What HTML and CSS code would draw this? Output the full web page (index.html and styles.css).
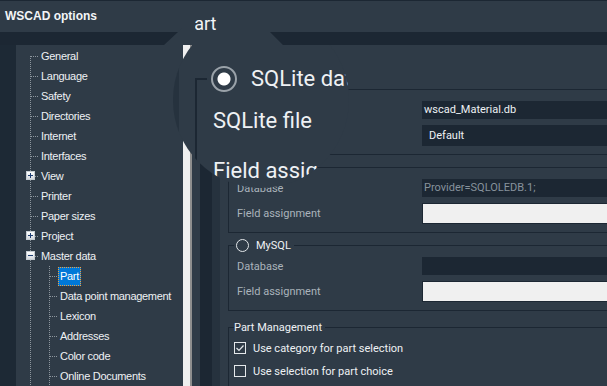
FILE: index.html
```html
<!DOCTYPE html>
<html>
<head>
    <meta charset="utf-8">
    <title>WSCAD options</title>
    <link rel="stylesheet" href="styles.css">
</head>
<body>
    <div class="titlebar">
        <div class="app-title">WSCAD options</div>
        <h1 class="page-title">Part</h1>
    </div>
    <div class="band"></div>
    <div class="main">
        <div class="gutter"></div>
        <div class="tree">
            <ul class="tree-root">
                <li><div class="node"><span class="lbl">General</span></div></li>
                <li><div class="node"><span class="lbl">Language</span></div></li>
                <li><div class="node"><span class="lbl">Safety</span></div></li>
                <li><div class="node"><span class="lbl">Directories</span></div></li>
                <li><div class="node"><span class="lbl">Internet</span></div></li>
                <li><div class="node"><span class="lbl">Interfaces</span></div></li>
                <li><div class="node"><span class="box plus"></span><span class="lbl">View</span></div></li>
                <li><div class="node"><span class="lbl">Printer</span></div></li>
                <li><div class="node"><span class="lbl">Paper sizes</span></div></li>
                <li><div class="node"><span class="box plus"></span><span class="lbl">Project</span></div></li>
                <li><div class="node"><span class="box"></span><span class="lbl">Master data</span></div>
                    <ul class="tree-sub">
                        <li><div class="node"><span class="lbl sel">Part</span></div></li>
                        <li><div class="node"><span class="lbl">Data point management</span></div></li>
                        <li><div class="node"><span class="lbl">Lexicon</span></div></li>
                        <li><div class="node"><span class="lbl">Addresses</span></div></li>
                        <li><div class="node"><span class="lbl">Color code</span></div></li>
                        <li><div class="node"><span class="lbl">Online Documents</span></div></li>
                    </ul>
                </li>
            </ul>
        </div>
        <div class="scroll"></div>
        <div class="col-slate"></div>
        <div class="col-dark"></div>
        <div class="col-mid"></div>
        <div class="panel">
            <div class="group">
                <div class="legend"><span class="radio on"></span>SQLite database</div>
                <div class="rows">
                    <div class="row"><span class="row-label active">SQLite file</span><span class="field">wscad_Material.db</span></div>
                    <div class="row"><span class="row-label active">Field assignment</span><span class="field select">Default</span></div>
                </div>
            </div>
            <div class="group">
                <div class="legend"><span class="radio"></span>SQL Server</div>
                <div class="rows">
                    <div class="row"><span class="row-label">Database</span><span class="field muted">Provider=SQLOLEDB.1;</span></div>
                    <div class="row"><span class="row-label">Field assignment</span><span class="field light"></span></div>
                </div>
            </div>
            <div class="group">
                <div class="legend"><span class="radio"></span>MySQL</div>
                <div class="rows">
                    <div class="row"><span class="row-label">Database</span><span class="field"></span></div>
                    <div class="row"><span class="row-label">Field assignment</span><span class="field light"></span></div>
                </div>
            </div>
            <div class="group last">
                <div class="legend plain">Part Management</div>
                <div class="checks">
                    <div class="check">
                        <svg width="12" height="12" viewBox="0 0 12 12"><rect x="0.5" y="0.5" width="11" height="11" fill="none" stroke="#e4e8eb"/><path d="M2.5 6l2.5 2.5 4.5-5" fill="none" stroke="#e4e8eb" stroke-width="1.2"/></svg>
                        Use category for part selection
                    </div>
                    <div class="check">
                        <svg width="12" height="12" viewBox="0 0 12 12"><rect x="0.5" y="0.5" width="11" height="11" fill="none" stroke="#e4e8eb"/></svg>
                        Use selection for part choice
                    </div>
                </div>
            </div>
        </div>
    </div>

    <!-- magnifier: same panel, drawn at 2x around (261,100) -->
    <div class="lens">
        <div class="lens-view">
            <div class="lens-src">
                <div class="col-dark"></div>
                <div class="col-mid"></div>
                <div class="panel">
                    <div class="group">
                        <div class="legend"><span class="radio on"></span>SQLite database</div>
                        <div class="rows">
                            <div class="row"><span class="row-label active">SQLite file</span><span class="field"></span></div>
                            <div class="row"><span class="row-label active">Field assignment</span><span class="field select"></span></div>
                        </div>
                    </div>
                </div>
            </div>
        </div>
    </div>
    <div class="glare"></div>
</body>
</html>
```

FILE: styles.css
```css
*{box-sizing: border-box;}
body{margin: 0;width: 607px;height: 386px;overflow: hidden;position: relative;background: #2f3b47;font-family: Roboto, "Liberation Sans", sans-serif;font-size: 11px;}

.titlebar{position: relative;z-index: 2;display: flex;height: 32px;border-top: 1px solid #1c2733;background: #2f3b47;}
.app-title{width: 183px;padding: 8px 0 0 5px;font: bold 12px/14px "Liberation Sans", sans-serif;color: #f3f5f7;}
.page-title{margin: 0;padding-top: 13px;font: 400 18px/20px Roboto, sans-serif;color: #f3f5f7;}
.band{position: relative;z-index: 2;height: 13px;background: #1c2733;}

.main{display: flex;height: 341px;}
.gutter{width: 16px;background: #1d2935;}
.tree{width: 167px;padding-top: 1px;overflow: hidden;}
.tree ul{list-style: none;margin: 0;padding: 0;position: relative;}
.tree ul:before{content: "";position: absolute;left: 0;top: 10px;bottom: 0;width: 1px;background: linear-gradient(#8d969e 1px, transparent 1px) 0 0/1px 2px repeat-y;}
.tree .tree-root{margin-left: 14px;}
.tree .tree-sub{margin-left: 19px;}
.tree .tree-sub:before{top: 0;}
.node{position: relative;height: 20px;display: flex;align-items: center;padding-left: 9px;}
.node:before{content: "";position: absolute;left: 1px;top: 10px;width: 8px;height: 1px;background: linear-gradient(to right, #8d969e 1px, transparent 1px) 0 0/2px 1px repeat-x;}
.lbl{padding: 0 2px;font: 11px/15px "Liberation Sans", sans-serif;letter-spacing: -0.3px;color: #eef1f4;white-space: nowrap;}
.lbl.sel{line-height: 19px;background: #0078d7;outline: 1px dotted #f0a040;outline-offset: -1px;color: #fff;}
.box{position: absolute;z-index: 1;left: -4px;top: 5px;width: 9px;height: 9px;border: 1px solid #c5ccd3;background: linear-gradient(#ffffff, #d3d8dd);}
.box:before{content: "";position: absolute;left: 1px;top: 3px;width: 5px;height: 1px;background: #1e3f74;}
.box.plus:after{content: "";position: absolute;left: 3px;top: 1px;width: 1px;height: 5px;background: #1e3f74;}

.scroll{width: 9px;background: #efefef;border-right: 2px solid #8e8e8e;}
.col-slate{width: 8px;}
.col-dark{width: 12px;flex: none;background: #1c2733;}
.col-mid{width: 8px;flex: none;background: #26323e;}

.panel{flex: 1;padding-top: 44px;overflow: hidden;}
.group{margin: 12px 0 0 8px;padding: 0 0 8px 8px;border: 1px solid #1c2733;border-right: 0;}
.group:first-child{margin-top: 0;}
.group.last{margin-top: 16px;}
.legend{display: flex;align-items: center;gap: 7px;width: max-content;height: 14px;margin: -8px 0 0 -3px;padding: 0 3px 0 2px;background: #2f3b47;color: #eef1f4;}
.legend.plain{padding-left: 0;}
.radio{width: 13px;height: 13px;border-radius: 50%;border: 1px solid #e3e7ea;}
.radio.on{border-color: #9aa2a9;background: radial-gradient(circle, #fff 0 3px, transparent 3.5px);}

.rows{display: flex;flex-direction: column;gap: 6px;padding-top: 5px;}
.row{display: flex;align-items: center;}
.row-label{width: 185px;flex: none;color: #aab3bb;white-space: nowrap;}
.row-label.active{color: #eef1f4;}
.field{width: 200px;flex: none;height: 18px;padding-left: 2px;line-height: 18px;background: #1c2733;color: #eef1f4;white-space: nowrap;}
.field.select{height: 21px;line-height: 21px;padding-left: 7px;}
.field.muted{color: #87929c;}
.field.light{height: 21px;background: #f0f0f0;border: 1px solid #1c2733;}

.checks{display: flex;flex-direction: column;gap: 7px;padding-top: 6px;}
.check{display: flex;align-items: center;gap: 7px;height: 16px;margin-left: -3px;color: #eef1f4;}

.lens{position: absolute;z-index: 1;left: 173px;top: 12px;width: 176px;height: 176px;border-radius: 50%;overflow: hidden;background: #2f3b47;}
.lens-view{position: absolute;left: 0;top: 0;width: 300px;transform: scale(2);transform-origin: 0 0;}
.lens-src{display: flex;height: 200px;margin: -11px 0 0 -17px;}
.glare{position: absolute;z-index: 3;left: 0;top: 0;width: 300px;height: 45px;background: #2f3b47;clip-path: polygon(164px 45px, 178px 32px, 182px 28px, 182px 12px, 195px 12px, 195px 32px, 270px 32px, 283px 45px);}
```
